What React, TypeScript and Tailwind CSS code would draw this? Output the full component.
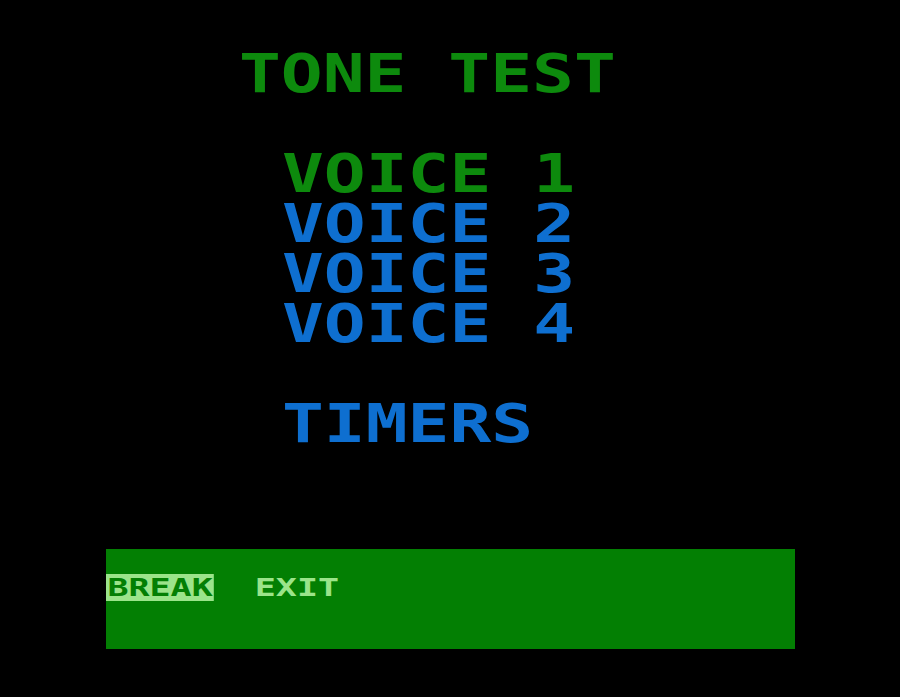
import React from 'react';

const voices = [
  { label: 'VOICE 1', active: true },
  { label: 'VOICE 2', active: false },
  { label: 'VOICE 3', active: false },
  { label: 'VOICE 4', active: false },
];

export default function App() {
  return (
    <div
      className="w-[900px] h-[697px] bg-black flex flex-col overflow-hidden"
      style={{ fontFamily: '"DejaVu Sans Mono", "Liberation Mono", monospace' }}
    >
      {/* title row */}
      <div className="pt-[49px] h-[99px] leading-[50px]">
        <div className="ml-[239px] text-[53.5px] font-bold text-[#0d8a0d] whitespace-pre origin-left scale-x-[1.3]">
          TONE TEST
        </div>
      </div>

      {/* blank row */}
      <div className="h-[50px]" />

      {/* voice list */}
      {voices.map((v) => (
        <div
          key={v.label}
          className={`h-[50px] leading-[50px] ml-[282px] text-[53.5px] font-bold whitespace-pre origin-left scale-x-[1.3] ${
            v.active ? 'text-[#0d8a0d]' : 'text-[#0e6fd0]'
          }`}
        >
          {v.label}
        </div>
      ))}

      <div className="h-[50px]" />

      <div className="h-[50px] leading-[50px] ml-[282px] text-[53.5px] font-bold text-[#0e6fd0] origin-left scale-x-[1.3]">
        TIMERS
      </div>

      {/* bottom menu panel */}
      <div className="mt-[100px] ml-[106px] w-[689px] h-[100px] bg-[#037f03] pt-[25px]">
        <div className="flex items-center h-[27px] leading-[27px] text-[25px] font-bold origin-left scale-x-[1.4]">
          <span className="bg-[#9be48a] text-[#037f03] px-[1px]">BREAK</span>
          <span className="ml-[29px] text-[#9be48a]">EXIT</span>
        </div>
      </div>
    </div>
  );
}
